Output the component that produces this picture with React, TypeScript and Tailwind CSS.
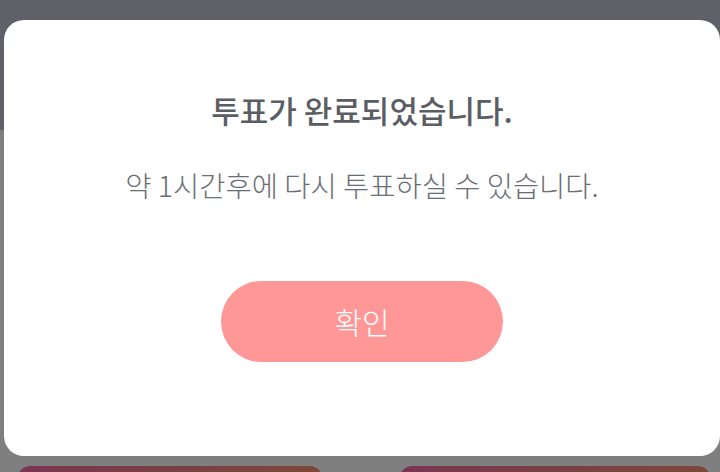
export default function App() {
  return (
    <div className="relative h-[472px] w-[720px] overflow-hidden bg-[#7f7f7f] font-['Noto_Sans_CJK_KR',sans-serif]">
      {/* page behind the dimmed overlay */}
      <div className="flex h-full flex-col">
        <div className="h-[130px] bg-[#5f6068]" />
        <div className="flex-1" />
        <div className="flex justify-between px-[18px]">
          <div className="h-[12px] w-[304px] translate-y-[6px] rounded-t-[14px] bg-gradient-to-r from-[#7a3550] to-[#7a4838]" />
          <div className="mr-[-8px] h-[12px] w-[310px] translate-y-[6px] rounded-t-[14px] bg-gradient-to-r from-[#7a3550] to-[#7a4838]" />
        </div>
      </div>

      {/* modal */}
      <div className="absolute left-[4px] top-[20px] flex h-[436px] w-[716px] flex-col items-center rounded-[20px] bg-white">
        <h1 className="mt-[70px] text-[31px] font-medium leading-[40px] text-[#5a5e64]">
          투표가 완료되었습니다.
        </h1>
        <p className="mt-[37px] text-[28.5px] font-light leading-[36px] text-[#6a6e74]">
          약 1시간후에 다시 투표하실 수 있습니다.
        </p>
        <button className="mt-[78px] flex h-[81px] w-[282px] items-center justify-center rounded-full bg-[#ff9797] text-[30px] font-light text-white">
          확인
        </button>
      </div>
    </div>
  );
}
